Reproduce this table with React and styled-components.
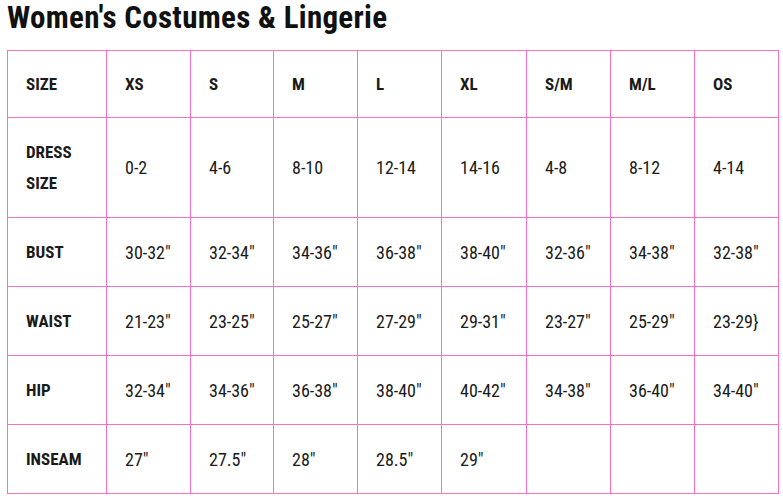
import React from 'react';
import styled, { createGlobalStyle } from 'styled-components';

const GlobalStyle = createGlobalStyle`
	body {
		margin: 0;
		background: #fff;
		color: #1a1a1a;
		font-family: 'Liberation Sans Narrow', 'Roboto Condensed', 'DejaVu Sans Condensed', sans-serif;
	}
`;

const Page = styled.div`
	padding: 0 5px 0 7px;
	width: 783px;
	box-sizing: border-box;
`;

const Title = styled.h1`
	margin: 0;
	height: 50px;
	font-size: 31px;
	font-weight: 700;
	line-height: 36px;
	color: #111;
	letter-spacing: 0.3px;
`;

const Table = styled.table`
	border-collapse: collapse;
	table-layout: fixed;
	width: 772px;
`;

const Cell = styled.td`
	border: 1px solid #ff6fbf;
	padding: 0 0 0 18px;
	height: ${(p) => p.$h}px;
	box-sizing: border-box;
	font-size: ${(p) => (p.$head ? 17 : 18)}px;
	font-weight: ${(p) => (p.$head ? 700 : 400)};
	line-height: 31px;
	color: #1a1a1a;
	vertical-align: middle;
`;

const cols = [99, 84, 83, 84, 84, 85, 84, 84, 84];

const rows = [
	{ h: 67, head: true, cells: ['SIZE', 'XS', 'S', 'M', 'L', 'XL', 'S/M', 'M/L', 'OS'] },
	{ h: 100, cells: ['DRESS SIZE', '0-2', '4-6', '8-10', '12-14', '14-16', '4-8', '8-12', '4-14'] },
	{ h: 69, cells: ['BUST', '30-32"', '32-34"', '34-36"', '36-38"', '38-40"', '32-36"', '34-38"', '32-38"'] },
	{ h: 69, cells: ['WAIST', '21-23"', '23-25"', '25-27"', '27-29"', '29-31"', '23-27"', '25-29"', '23-29}'] },
	{ h: 69, cells: ['HIP', '32-34"', '34-36"', '36-38"', '38-40"', '40-42"', '34-38"', '36-40"', '34-40"'] },
	{ h: 69, cells: ['INSEAM', '27"', '27.5"', '28"', '28.5"', '29"', '', '', ''] },
];

const App = () => {
	return (
		<Page>
			<GlobalStyle />
			<Title>Women's Costumes &amp; Lingerie</Title>
			<Table>
				<colgroup>
					{cols.map((w, i) => (
						<col key={i} style={{ width: w }} />
					))}
				</colgroup>
				<tbody>
					{rows.map((r, ri) => (
						<tr key={ri}>
							{r.cells.map((c, ci) => (
								<Cell key={ci} $h={r.h} $head={r.head || ci === 0}>
									{ci === 0 && c === 'DRESS SIZE' ? (
										<>
											DRESS
											<br />
											SIZE
										</>
									) : (
										c
									)}
								</Cell>
							))}
						</tr>
					))}
				</tbody>
			</Table>
		</Page>
	);
};

export default App;
